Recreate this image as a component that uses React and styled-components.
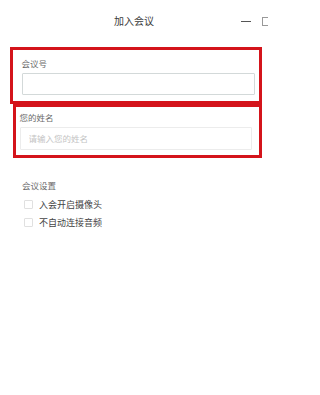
import React from "react";
import styled, { createGlobalStyle } from "styled-components";

const GlobalStyle = createGlobalStyle`
  html, body {
    margin: 0;
    padding: 0;
    background: #ffffff;
  }
  body {
    font-family: "Noto Sans CJK SC", "Noto Sans", sans-serif;
    overflow: hidden;
  }
`;

const Page = styled.div`
  width: 268px;
  height: 395px;
  background: #fff;
  overflow: hidden;
`;

// title bar
const TitleBar = styled.div`
  height: 47px;
  display: grid;
  grid-template-columns: 1fr auto 1fr;
  align-items: start;
`;

const Title = styled.div`
  grid-column: 2;
  padding-top: 14px;
  font-size: 10px;
  line-height: 14px;
  color: #3a3a3a;
`;

const WinControls = styled.div`
  grid-column: 3;
  display: flex;
  justify-content: flex-end;
  align-items: center;
  gap: 11px;
  padding-top: 17px;
  margin-right: -3px;
`;

const Minimize = styled.span`
  display: block;
  width: 10px;
  height: 1px;
  background: #555;
`;

const Maximize = styled.span`
  display: block;
  width: 7px;
  height: 7px;
  border: 1px solid #999;
`;

// highlighted form groups
const Group = styled.div`
  box-sizing: border-box;
  height: ${(p) => p.$h}px;
  margin: 0 6px 0 ${(p) => p.$ml}px;
  border: 3.5px solid #d4141b;
  padding: ${(p) => p.$pad};
  display: flex;
  flex-direction: column;
  gap: 4px;
`;

const Label = styled.div`
  font-size: 8.5px;
  line-height: 12px;
  color: #6a6a6a;
`;

const Input = styled.input`
  box-sizing: border-box;
  width: 100%;
  height: ${(p) => p.$h}px;
  margin: 0;
  border: 1px solid ${(p) => p.$border};
  border-radius: 1px;
  padding: 0 8px;
  font-family: inherit;
  font-size: 8.5px;
  color: #333;
  background: #fff;
  outline: none;

  &::placeholder {
    color: #c4c4c4;
  }
`;

// settings section
const Settings = styled.div`
  margin-top: 21px;
  padding-left: 22px;
  display: flex;
  flex-direction: column;
`;

const SectionTitle = styled.div`
  font-size: 8.5px;
  line-height: 12px;
  color: #6a6a6a;
  margin-bottom: 4px;
`;

const CheckRow = styled.label`
  display: flex;
  align-items: center;
  gap: 6px;
  height: 18px;
  padding-left: 2px;
  font-size: 9px;
  color: #444;
`;

const Box = styled.span`
  box-sizing: border-box;
  width: 9px;
  height: 9px;
  border: 1px solid #e0e0e0;
  border-radius: 1px;
  background: #fff;
`;

const App = () => {
  const [meetingNo, setMeetingNo] = React.useState("");
  const [name, setName] = React.useState("");

  return (
    <Page>
      <GlobalStyle />
      <TitleBar>
        <Title>加入会议</Title>
        <WinControls>
          <Minimize />
          <Maximize />
        </WinControls>
      </TitleBar>

      <Group $h={57} $ml={10} $pad="7px 4.5px 4px 8.5px">
        <Label>会议号</Label>
        <Input
          $h={22}
          $border="#d3d9d9"
          value={meetingNo}
          onChange={(e) => setMeetingNo(e.target.value)}
        />
      </Group>

      <Group $h={54} $ml={13} $pad="3.5px 7px 4px 3.5px">
        <Label>您的姓名</Label>
        <Input
          $h={23}
          $border="#ececec"
          placeholder="请输入您的姓名"
          value={name}
          onChange={(e) => setName(e.target.value)}
        />
      </Group>

      <Settings>
        <SectionTitle>会议设置</SectionTitle>
        <CheckRow>
          <Box />
          入会开启摄像头
        </CheckRow>
        <CheckRow>
          <Box />
          不自动连接音频
        </CheckRow>
      </Settings>
    </Page>
  );
};

export default App;
